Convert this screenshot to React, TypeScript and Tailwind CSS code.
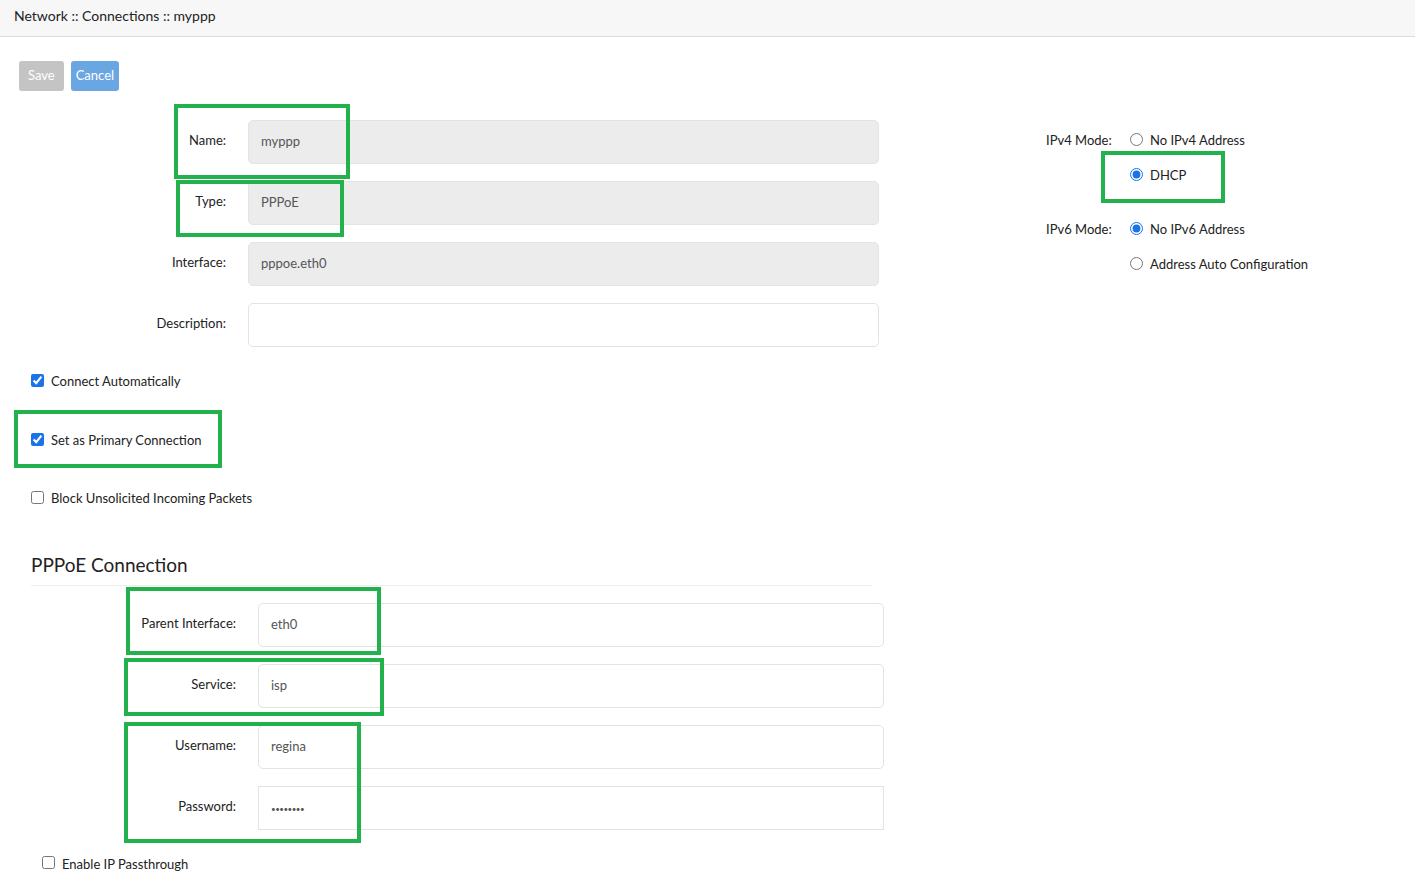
import React from "react";

type Field = { label: string; value: string; disabled?: boolean; square?: boolean; dots?: boolean };

const topFields: Field[] = [
  { label: "Name:", value: "myppp", disabled: true },
  { label: "Type:", value: "PPPoE", disabled: true },
  { label: "Interface:", value: "pppoe.eth0", disabled: true },
  { label: "Description:", value: "" },
];

const pppoeFields: Field[] = [
  { label: "Parent Interface:", value: "eth0" },
  { label: "Service:", value: "isp" },
  { label: "Username:", value: "regina" },
  { label: "Password:", value: "••••••••", square: true, dots: true },
];

function Row({ f, labelW, inputW }: { f: Field; labelW: string; inputW: string }) {
  return (
    <div className="flex items-start h-[61px]">
      <label className={`${labelW} shrink-0 text-right pr-[22px] pt-[11px] text-[13px] text-[#222]`}>
        {f.label}
      </label>
      <div
        className={`${inputW} h-[44px] border border-[#e3e3e3] flex items-center px-3 text-[#555] ${
          f.dots ? "text-[8px] tracking-[-0.5px] pt-[3px]" : "text-[13px]"
        } ${f.disabled ? "bg-[#ececec]" : "bg-white"} ${f.square ? "rounded-none" : "rounded-[5px]"}`}
      >
        {f.value}
      </div>
    </div>
  );
}

function Check({ label, checked }: { label: string; checked?: boolean }) {
  return (
    <label className="flex items-center gap-[7px] text-[13px] text-[#222]">
      <input type="checkbox" defaultChecked={checked} className="m-0 w-[13px] h-[13px] accent-[#1a73e8]" />
      <span className="pt-[3px]">{label}</span>
    </label>
  );
}

function Radio({ label, checked, name }: { label: string; checked?: boolean; name: string }) {
  return (
    <label className="flex items-center gap-[7px] text-[13px] text-[#222]">
      <input type="radio" name={name} defaultChecked={checked} className="m-0 w-[13px] h-[13px] accent-[#1a73e8]" />
      <span className="pt-[2px]">{label}</span>
    </label>
  );
}

const Box = ({ cls }: { cls: string }) => (
  <div className={`absolute border-4 border-[#22b14c] pointer-events-none ${cls}`} />
);

export default function App() {
  return (
    <div className="relative min-h-screen bg-white" style={{ fontFamily: "Lato, 'Noto Sans', sans-serif" }}>
      <header className="h-[37px] bg-[#f7f7f7] border-b border-[#dcdcdc] flex items-center pb-[6px] px-[14px] text-[14px] text-[#222]">
        Network :: Connections :: myppp
      </header>

      <div className="flex gap-[7px] pl-[19px] pt-[24px]">
        <button className="h-[30px] px-[9px] rounded-[3px] bg-[#c4c4c4] text-white text-[13px]">Save</button>
        <button className="h-[30px] px-[5px] rounded-[3px] bg-[#6aa6e2] text-white text-[13px]">Cancel</button>
      </div>

      <div className="flex pt-[29px]">
        <div className="w-[900px]">
          {topFields.map((f) => (
            <Row key={f.label} f={f} labelW="w-[248px]" inputW="w-[631px]" />
          ))}

          <div className="pl-[31px] pt-[5px] flex flex-col">
            <div className="h-[59px]">
              <Check label="Connect Automatically" checked />
            </div>
            <div className="h-[58px]">
              <Check label="Set as Primary Connection" checked />
            </div>
            <Check label="Block Unsolicited Incoming Packets" />
          </div>

          <div className="pl-[31px] pt-[46px]">
            <h2 className="text-[19px] text-[#222] leading-none pb-[11px] border-b border-[#eeeeee] w-[841px]">
              PPPoE Connection
            </h2>
          </div>

          <div className="pt-[17px]">
            {pppoeFields.map((f) => (
              <Row key={f.label} f={f} labelW="w-[258px]" inputW="w-[626px]" />
            ))}
          </div>

          <div className="pl-[42px] mt-[5px]">
            <Check label="Enable IP Passthrough" />
          </div>
        </div>

        <div className="pl-[146px] pt-[11px] text-[13px] text-[#222]">
          <div className="flex">
            <div className="w-[84px]">IPv4 Mode:</div>
            <div className="flex flex-col gap-[13px] -mt-[2px]">
              <Radio name="v4" label="No IPv4 Address" />
              <Radio name="v4" label="DHCP" checked />
            </div>
          </div>
          <div className="flex mt-[35px]">
            <div className="w-[84px]">IPv6 Mode:</div>
            <div className="flex flex-col gap-[13px] -mt-[2px]">
              <Radio name="v6" label="No IPv6 Address" checked />
              <Radio name="v6" label="Address Auto Configuration" />
            </div>
          </div>
        </div>
      </div>

      <Box cls="left-[174px] top-[104px] w-[176px] h-[75px]" />
      <Box cls="left-[176px] top-[180px] w-[168px] h-[57px]" />
      <Box cls="left-[1101px] top-[151px] w-[124px] h-[52px]" />
      <Box cls="left-[14px] top-[410px] w-[208px] h-[58px]" />
      <Box cls="left-[126px] top-[587px] w-[255px] h-[68px]" />
      <Box cls="left-[124px] top-[658px] w-[260px] h-[58px]" />
      <Box cls="left-[124px] top-[722px] w-[237px] h-[121px]" />
    </div>
  );
}
